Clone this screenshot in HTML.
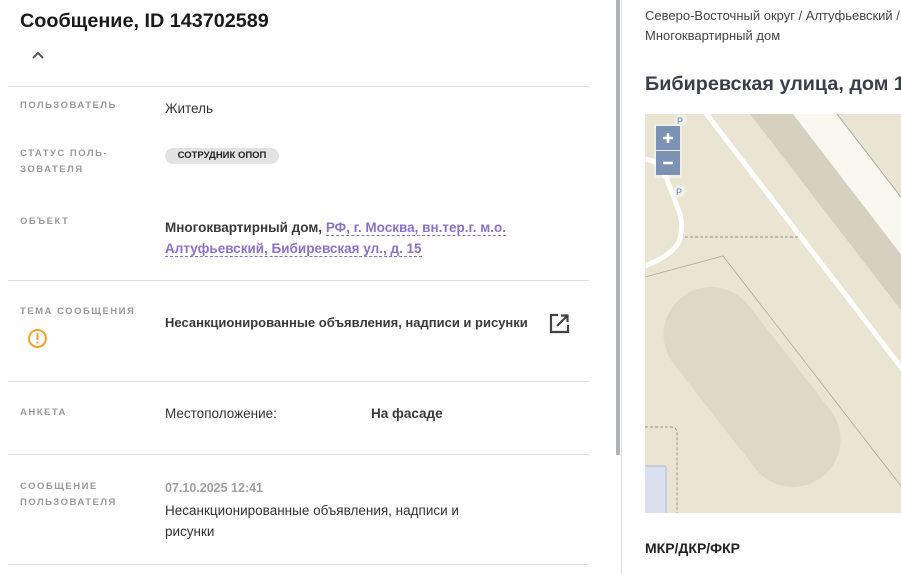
<!DOCTYPE html>
<html><head><meta charset="utf-8"><style>
*{margin:0;padding:0;box-sizing:border-box}
body{width:901px;height:574px;overflow:hidden;background:#fff;font-family:"Liberation Sans",Arial,sans-serif;position:relative;color:#333}
.a{position:absolute;white-space:nowrap}
.lab{font-size:9.5px;font-weight:bold;letter-spacing:1.5px;color:#9a9a9a;line-height:16px}
.val{font-size:13.5px;color:#333}
.b{font-weight:bold;color:#3a3a3a}
.hr{position:absolute;left:8px;width:581px;height:1px;background:#e0e0e0}
.lnk{color:#8a72c8;border-bottom:1px dashed #8a72c8}
</style></head><body>
<div class="a" style="left:20px;top:10px;font-size:19.8px;font-weight:bold;color:#1a1a1a">Сообщение, ID 143702589</div>
<svg class="a" style="left:31px;top:50px" width="14" height="10"><path d="M2 8 L7 3 L12 8" stroke="#555" stroke-width="2" fill="none"/></svg>
<div class="hr" style="top:86px"></div>

<div class="a lab" style="left:20px;top:98px">ПОЛЬЗОВАТЕЛЬ</div>
<div class="a val" style="left:165px;top:101px">Житель</div>

<div class="a lab" style="left:20px;top:146px">СТАТУС ПОЛЬ-<br>ЗОВАТЕЛЯ</div>
<div class="a" style="left:165px;top:148px;width:114px;height:16px;border-radius:8px;background:#e2e2e2;font-size:9.5px;font-weight:bold;color:#222;text-align:center;line-height:16px">СОТРУДНИК ОПОП</div>

<div class="a lab" style="left:20px;top:214px">ОБЪЕКТ</div>
<div class="a val b" style="left:165px;top:217px;line-height:21px">Многоквартирный дом, <span class="lnk">РФ, г. Москва, вн.тер.г. м.о.</span><br><span class="lnk">Алтуфьевский, Бибиревская ул., д. 15</span></div>
<div class="hr" style="top:280px"></div>

<div class="a lab" style="left:20px;top:304px">ТЕМА СООБЩЕНИЯ</div>
<svg class="a" style="left:27px;top:328px" width="21" height="21"><circle cx="10.5" cy="10.5" r="8.5" stroke="#f5a030" stroke-width="2" fill="none"/><rect x="9.5" y="5" width="2" height="7" fill="#f5a030"/><rect x="9.5" y="13.5" width="2" height="2" fill="#f5a030"/></svg>
<div class="a val b" style="left:165px;top:315px;font-size:13px">Несанкционированные объявления, надписи и рисунки</div>
<svg class="a" style="left:549px;top:313px" width="21" height="21"><path d="M9 2 H2 V19 H19 V12" stroke="#444" stroke-width="2.2" fill="none"/><path d="M8 13 L18 3 M12 2.5 H18.5 V9" stroke="#444" stroke-width="2.2" fill="none"/></svg>
<div class="hr" style="top:381px"></div>

<div class="a lab" style="left:20px;top:405px">АНКЕТА</div>
<div class="a val" style="left:165px;top:406px">Местоположение:</div>
<div class="a val b" style="left:371px;top:406px">На фасаде</div>
<div class="hr" style="top:454px"></div>

<div class="a lab" style="left:20px;top:479px;line-height:16px">СООБЩЕНИЕ<br>ПОЛЬЗОВАТЕЛЯ</div>
<div class="a" style="left:165px;top:481px;font-size:12.5px;font-weight:bold;color:#a0a0a0">07.10.2025 12:41</div>
<div class="a val" style="left:165px;top:500px;line-height:21px">Несанкционированные объявления, надписи и<br>рисунки</div>
<div class="hr" style="top:564px"></div>

<div class="a" style="left:616px;top:0;width:4px;height:455px;background:#b0b2b8"></div>
<div class="a" style="left:621px;top:0;width:1px;height:574px;background:#dedede"></div>

<div class="a" style="left:645px;top:6px;font-size:13px;color:#444;line-height:20px">Северо-Восточный округ / Алтуфьевский /<br>Многоквартирный дом</div>
<div class="a" style="left:645px;top:73px;font-size:19.8px;font-weight:bold;color:#3a3f4a">Бибиревская улица, дом 15</div>

<svg class="a" style="left:645px;top:114px" width="256" height="399" viewBox="0 0 256 399">
<rect width="256" height="399" fill="#e9e5d2"/>
<polygon points="105,0 148,0 455,399 412,399" fill="#d6d0c0"/>
<polygon points="148,0 192,0 499,399 455,399" fill="#f9f8ef"/>
<line x1="192" y1="0" x2="499" y2="399" stroke="#aaa" stroke-width="1"/>
<line x1="60" y1="-2" x2="368" y2="399" stroke="#fff" stroke-width="5"/>
<path d="M-5 45 Q15 45 20 60 L35 100 Q38 110 35 125 Q30 140 0 152" stroke="#fff" stroke-width="5" fill="none"/>
<path d="M40 123 H155" stroke="#999" stroke-width="1" stroke-dasharray="3,2" fill="none"/>
<path d="M0 163 L78 142 L256 372" stroke="#aaa" stroke-width="0.8" fill="none"/>
<rect x="-47.5" y="-114" width="95" height="228" rx="47.5" fill="#ddd9c5" transform="translate(107,273) rotate(-38)"/>
<path d="M0 313 H26 Q32 313 32 319 V400" stroke="#999" stroke-width="1" stroke-dasharray="3,2" fill="none"/>
<rect x="-5" y="352" width="26" height="50" rx="2" fill="#dbe0f0" stroke="#b8bcd0"/>
<circle cx="36" cy="6" r="6" fill="#f1efe6"/><text x="32" y="10" font-size="9" fill="#4a90e0" font-family="Liberation Sans">P</text>
<circle cx="35" cy="77" r="6" fill="#f1efe6"/><text x="31" y="81" font-size="9" fill="#4a90e0" font-family="Liberation Sans">P</text>
<rect x="9" y="10" width="28" height="54" rx="3" fill="#fff" opacity="0.4"/>
<rect x="11" y="12" width="24" height="24" fill="#7a93b5"/><rect x="11" y="37" width="24" height="24" fill="#7a93b5"/>
<path d="M18 24 H28 M23 19 V29 M18 49 H28" stroke="#fff" stroke-width="2.5"/>
</svg>

<div class="a" style="left:645px;top:540px;font-size:14px;font-weight:bold;color:#222">МКР/ДКР/ФКР</div>
</body></html>
